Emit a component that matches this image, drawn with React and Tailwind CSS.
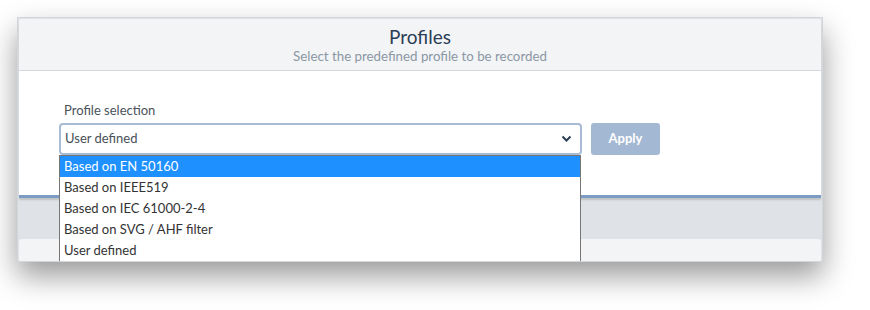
import React from 'react';

const options = [
  'Based on EN 50160',
  'Based on IEEE519',
  'Based on IEC 61000-2-4',
  'Based on SVG / AHF filter',
  'User defined',
];

export default function App() {
  return (
    <div
      className="w-[870px] h-[310px] bg-white pt-[17px] pl-[17px]"
      style={{ fontFamily: 'Lato, "Noto Sans", sans-serif' }}
    >
      <div className="relative w-[806px] h-[245px] overflow-hidden bg-[#dfe3e7] border border-[#d2d6da] p-px shadow-[0_14px_28px_rgba(0,0,0,0.4)]">
        {/* profiles card */}
        <div className="bg-white rounded-t-[3px] border-b-[3px] border-[#7c9dc3] shadow-[0_2px_2px_rgba(0,0,0,0.15)]">
          <div className="h-[52px] bg-[#f3f4f6] border-b border-[#d3d8de] flex flex-col items-center pt-[7px] rounded-t-[3px]">
            <div className="text-[19px] leading-[22px] text-[#2c3e55]">Profiles</div>
            <div className="text-[13.3px] leading-[17px] text-[#8b97a4]">
              Select the predefined profile to be recorded
            </div>
          </div>
          <div className="h-[124px] pl-[40px] pt-[31px]">
            <div className="text-[13px] leading-[16px] text-[#4a525a] pl-[5px]">Profile selection</div>
            <div className="flex items-center gap-[9px] mt-[5px]">
              <div className="w-[523px] h-[32px] border-2 border-[#a8bbd4] rounded-[4px] flex items-center justify-between pl-[4px] pr-[8px]">
                <span className="text-[13px] text-[#495057]">User defined</span>
                <svg width="11" height="8" viewBox="0 0 11 8">
                  <path d="M1.5 1.5 L5.5 5.5 L9.5 1.5" fill="none" stroke="#2c3e55" strokeWidth="2" />
                </svg>
              </div>
              <div className="w-[69px] h-[32px] rounded-[3px] bg-[#a3b8d3] text-white font-bold text-[13px] flex items-center justify-center">
                Apply
              </div>
            </div>
          </div>
        </div>
        {/* next card */}
        <div className="mt-[41px] h-[40px] bg-[#f3f4f6] rounded-t-[3px]" />

        {/* open dropdown list */}
        <div className="absolute left-[41px] top-[137px] w-[522px] bg-white border border-[#767676]">
          {options.map((o, i) => (
            <div
              key={o}
              className={
                i === 0
                  ? 'h-[21px] leading-[21px] pl-[4px] text-[13px] bg-[#1e90ff] text-white'
                  : 'h-[21px] leading-[21px] pl-[4px] text-[13px] text-[#333]'
              }
            >
              {o}
            </div>
          ))}
        </div>
      </div>
    </div>
  );
}
